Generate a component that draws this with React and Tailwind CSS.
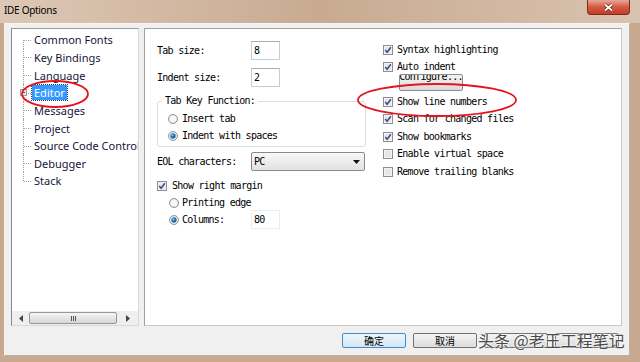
import React from "react";

const mono =
  "font-['DejaVu_Sans_Mono',monospace] text-[10px] tracking-[-0.72px] text-black leading-none whitespace-nowrap";

function Check({ checked }) {
  return (
    <svg width="10" height="10" viewBox="0 0 10 10" className="flex-none">
      <rect x="0.5" y="0.5" width="9" height="9" fill="#f3f3f3" stroke="#8e8f8f" />
      <rect x="1.5" y="1.5" width="7" height="7" fill="#e6e6e6" stroke="#f8f8f8" strokeWidth="0.6" />
      {checked && (
        <path d="M2.2 4.9 L4.1 7.2 L7.9 2.2" fill="none" stroke="#3a4c8c" strokeWidth="1.5" />
      )}
    </svg>
  );
}

function Radio({ on }) {
  return (
    <svg width="10" height="10" viewBox="0 0 10 10" className="flex-none">
      <circle cx="5" cy="5" r="4.5" fill="#e4e4e4" stroke="#8b8b8b" strokeWidth="0.9" />
      <circle cx="5" cy="5" r="3.3" fill="#f7f7f7" />
      {on && (
        <>
          <circle cx="5" cy="5" r="2.7" fill="#1c6cb5" />
          <circle cx="4.4" cy="4.3" r="1.1" fill="#8ccaf2" />
        </>
      )}
    </svg>
  );
}

function TreeRow({ label, first, last, box, selected }) {
  return (
    <div className="flex items-center h-[17.65px]">
      <div className="relative w-[20px] self-stretch flex-none">
        <div
          className={
            "absolute left-[11px] border-l border-dotted border-[#a3a3a3] " +
            (first ? "top-1/2 bottom-0" : last ? "top-0 h-1/2" : "top-0 bottom-0")
          }
        />
        <div className="absolute left-[12px] w-[7px] top-1/2 border-t border-dotted border-[#a3a3a3]" />
        {box && (
          <div className="absolute left-[8px] top-1/2 -mt-[3.5px] w-[7px] h-[7px] border border-[#9a9a9a] bg-[#eeeeee] flex items-center justify-center">
            <div className="w-[3px] h-[1px] bg-[#555]" />
          </div>
        )}
      </div>
      <span
        className={
          "px-[2px] h-[15px] flex items-center whitespace-nowrap font-['Noto_Sans',sans-serif] text-[11px] leading-none " +
          (selected
            ? "bg-[#3399ff] text-white outline outline-1 outline-dotted outline-[#2a3a70]"
            : "text-[#16163a]")
        }
      >
        {label}
      </span>
    </div>
  );
}

function Input({ value, light }) {
  return (
    <div
      className={
        "w-[29px] h-[19px] flex-none bg-white border flex items-center pl-[2px] " +
        (light ? "border-[#ececec]" : "border-[#c8cdd3] border-t-[#abadb3]")
      }
    >
      <span className={mono}>{value}</span>
    </div>
  );
}

function CheckRow({ label, checked }) {
  return (
    <div className="flex items-center h-[17.5px] gap-[4px]">
      <Check checked={checked} />
      <span className={mono}>{label}</span>
    </div>
  );
}

export default function App() {
  const tree = [
    "Common Fonts",
    "Key Bindings",
    "Language",
    "Editor",
    "Messages",
    "Project",
    "Source Code Control",
    "Debugger",
    "Stack",
  ];
  return (
    <div className="relative w-[640px] h-[362px] overflow-hidden bg-[#c8a990] flex flex-col">
      {/* title bar */}
      <div className="h-[23px] flex-none flex items-start justify-between bg-gradient-to-r from-[#dcc8b6] via-[#c9aa91] to-[#d8c3b0]">
        <span className="pl-[4px] pt-[3px] font-['Noto_Sans',sans-serif] text-[10px] tracking-[-0.3px] text-black leading-[14px]">
          IDE Options
        </span>
        <div className="mr-[10px] w-[43px] h-[15px] rounded-b-[4px] border border-t-0 border-[#7e2a1c] bg-gradient-to-b from-[#e9a797] via-[#d45a43] to-[#c23b26] flex items-center justify-center">
          <svg width="11" height="9" viewBox="0 0 11 9">
            <path d="M2 1.5 L9 7.5 M9 1.5 L2 7.5" stroke="#5a1a10" strokeWidth="3" />
            <path d="M2 1.5 L9 7.5 M9 1.5 L2 7.5" stroke="#ffffff" strokeWidth="1.8" />
          </svg>
        </div>
      </div>

      {/* client area */}
      <div className="flex-1 ml-[4px] mr-[10px] mb-[6px] bg-[#f0f0f0] border border-[#f7f5f3] border-r-[#b8b0a8] border-b-[#b8b0a8] flex flex-col">
        <div className="flex gap-[5px] pl-[6px] pt-[4px] pr-[7px]">
          {/* tree panel */}
          <div className="w-[128px] h-[298px] flex-none bg-white border border-[#d9d9d9] border-l-[#828790] border-t-[#9a9a9a] flex flex-col overflow-hidden">
            <div className="flex-1 pt-[2px]">
              {tree.map((t, i) => (
                <TreeRow
                  key={t}
                  label={t}
                  first={i === 0}
                  last={i === tree.length - 1}
                  box={t === "Editor"}
                  selected={t === "Editor"}
                />
              ))}
            </div>
            <div className="h-[14px] flex-none flex items-center bg-[#efefef]">
              <div className="w-[17px] flex justify-center">
                <svg width="4" height="7" viewBox="0 0 4 7">
                  <path d="M4 0 L0 3.5 L4 7 Z" fill="#444" />
                </svg>
              </div>
              <div className="w-[88px] h-[12px] rounded-[2px] border border-[#979797] bg-gradient-to-b from-[#f6f6f6] to-[#d6d6d6] flex items-center justify-center gap-[1px]">
                <div className="w-[1px] h-[5px] bg-[#555]" />
                <div className="w-[1px] h-[5px] bg-[#555]" />
                <div className="w-[1px] h-[5px] bg-[#555]" />
              </div>
              <div className="flex-1 flex justify-center">
                <svg width="4" height="7" viewBox="0 0 4 7">
                  <path d="M0 0 L4 3.5 L0 7 Z" fill="#444" />
                </svg>
              </div>
            </div>
          </div>

          {/* right panel */}
          <div className="flex-1 h-[298px] bg-white border border-[#c9c9c9] border-l-[#a0a0a0] border-t-[#a0a0a0] grid grid-cols-[226px_1fr] pl-[12px]">
            {/* left column */}
            <div className="flex flex-col pt-[12px]">
              <div className="flex items-center h-[19px]">
                <span className={mono + " w-[94px]"}>Tab size:</span>
                <Input value="8" />
              </div>
              <div className="flex items-center h-[19px] mt-[8px]">
                <span className={mono + " w-[94px]"}>Indent size:</span>
                <Input value="2" />
              </div>
              <fieldset className="mt-[9px] w-[209px] border border-[#d5dfe5] rounded-[3px] pb-[1px]">
                <legend className={mono + " ml-[4px] px-[3px] leading-[13px]"}>Tab Key Function:</legend>
                <div className="pt-[4px] pl-[10px]">
                  <div className="flex items-center h-[17.5px] gap-[4px]">
                    <Radio on={false} />
                    <span className={mono}>Insert tab</span>
                  </div>
                  <div className="flex items-center h-[17.5px] gap-[4px]">
                    <Radio on={true} />
                    <span className={mono}>Indent with spaces</span>
                  </div>
                </div>
              </fieldset>
              <div className="flex items-center h-[19px] mt-[5px]">
                <span className={mono + " w-[94px]"}>EOL characters:</span>
                <div className="w-[114px] h-[19px] rounded-[2px] border border-[#8a8a8a] bg-gradient-to-b from-[#f8f8f8] to-[#e2e2e2] flex items-center justify-between pl-[2px] pr-[4px]">
                  <span className={mono}>PC</span>
                  <svg width="7" height="4" viewBox="0 0 7 4">
                    <path d="M0 0 L7 0 L3.5 4 Z" fill="#111" />
                  </svg>
                </div>
              </div>
              <div className="flex items-center h-[17px] mt-[6px] gap-[5px]">
                <Check checked={true} />
                <span className={mono}>Show right margin</span>
              </div>
              <div className="flex items-center h-[17px] pl-[12px] gap-[3px]">
                <Radio on={false} />
                <span className={mono}>Printing edge</span>
              </div>
              <div className="flex items-center h-[17px] pl-[12px] gap-[3px]">
                <Radio on={true} />
                <span className={mono + " w-[66px]"}>Columns:</span>
                <Input value="80" light />
              </div>
            </div>

            {/* right column */}
            <div className="flex flex-col pt-[12px]">
              <CheckRow label="Syntax highlighting" checked />
              <CheckRow label="Auto indent" checked />
              <div className="ml-[16px] -mt-[2px] w-[64px] h-[17px] rounded-[2px] border border-[#8c8c8c] bg-gradient-to-b from-[#f4f4f4] to-[#dadada] overflow-hidden flex justify-center items-start">
                <span className={mono + " -mt-[3px]"}>Configure...</span>
              </div>
              <div className="mt-[2px]" />
              <CheckRow label="Show line numbers" checked />
              <CheckRow label="Scan for changed files" checked />
              <CheckRow label="Show bookmarks" checked />
              <CheckRow label="Enable virtual space" checked={false} />
              <CheckRow label="Remove trailing blanks" checked={false} />
            </div>
          </div>
        </div>

        {/* buttons */}
        <div className="flex justify-end gap-[7px] pr-[10px] mt-[7px]">
          <div className="w-[64px] h-[15px] rounded-[2px] border border-[#3c8ed0] bg-gradient-to-b from-[#eef6fc] to-[#d6e6f2] flex items-center justify-center font-['Noto_Sans_CJK_SC',sans-serif] text-[10px] leading-none text-black">
            确定
          </div>
          <div className="w-[64px] h-[15px] rounded-[2px] border border-[#707070] bg-gradient-to-b from-[#f4f4f4] to-[#dcdcdc] flex items-center justify-center font-['Noto_Sans_CJK_SC',sans-serif] text-[10px] leading-none text-black">
            取消
          </div>
          <div className="w-[64px] h-[15px] rounded-[2px] border border-[#707070] bg-gradient-to-b from-[#f4f4f4] to-[#dcdcdc]" />
          <div className="w-[64px] h-[15px] rounded-[2px] border border-[#707070] bg-gradient-to-b from-[#f4f4f4] to-[#dcdcdc]" />
        </div>
      </div>

      {/* watermark */}
      <div className="absolute left-[478px] top-[332px] font-['Noto_Sans_CJK_SC',sans-serif] text-[16px] leading-none text-[#4a4a4a] whitespace-nowrap [text-shadow:0_0_2px_#fff,0_0_2px_#fff]">
        头条 @老王工程笔记
      </div>

      {/* red annotation ellipses */}
      <svg className="absolute left-0 top-0 pointer-events-none" width="640" height="362" viewBox="0 0 640 362">
        <ellipse cx="55" cy="94" rx="33" ry="13" fill="none" stroke="#e3141c" strokeWidth="1.8" />
        <ellipse cx="437" cy="100" rx="79" ry="16" fill="none" stroke="#e3141c" strokeWidth="1.8" />
      </svg>
    </div>
  );
}
